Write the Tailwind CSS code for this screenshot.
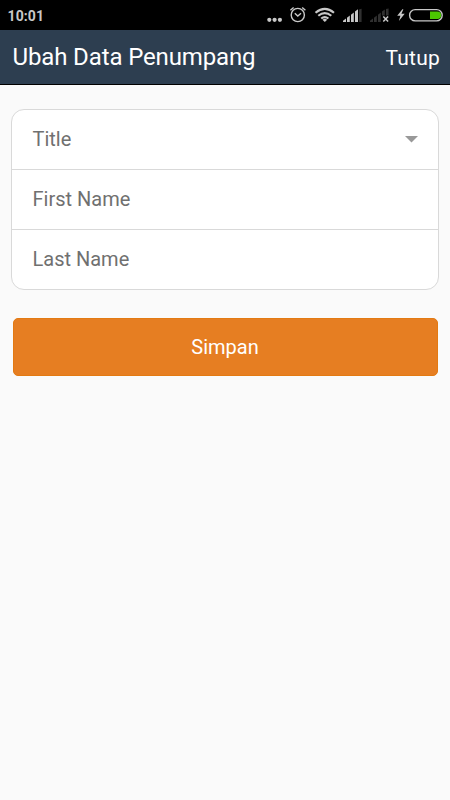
<!DOCTYPE html>
<html lang="id">
<head>
<meta charset="utf-8">
<title>Ubah Data Penumpang</title>
<script src="https://cdn.jsdelivr.net/npm/@tailwindcss/browser@4"></script>
</head>
<body class="flex h-[800px] w-[450px] flex-col overflow-hidden bg-[#fafafa] font-['Roboto',sans-serif]">
  <div class="flex h-[30px] items-center justify-between bg-black pl-[7.5px] text-[#c8c8c8]">
    <span class="pt-px text-[14px] font-bold leading-none tracking-[0.1px]">10:01</span>
    <svg class="h-[30px] w-[190px]" viewBox="260 0 190 30" fill="none" stroke="#c8c8c8">
      <g fill="#c8c8c8" stroke="none"><circle cx="269.3" cy="19.8" r="2.1"/><circle cx="274.6" cy="19.8" r="2.1"/><circle cx="279.9" cy="19.8" r="2.1"/></g>
      <g stroke-width="1.4"><circle cx="297.8" cy="15" r="6.6"/><path d="M294.8 13.3l3 2.8 3.2-2.8M290.4 10.3l3.2-2.8M305.4 10.3l-3.2-2.8"/></g>
      <g stroke-width="2.1"><path d="M315.5 12.8Q324.8 5 334 12.8M318.3 15.8Q324.8 10.4 331.3 15.8M321.2 18.5Q324.8 15.6 328.4 18.5"/></g>
      <path d="M322.4 19.7Q324.8 18 327.2 19.7L324.8 22Z" fill="#c8c8c8" stroke="none"/>
      <path fill="#c8c8c8" stroke="none" d="M343 22v-1.2l3-2.3v3.5zM347 22v-4.3l2.8-2.1v6.4zM351 22v-7.3l2.8-2.2v9.5zM355 22v-10.4l3-2.3v12.7z"/>
      <path fill="#303030" stroke="none" d="M359 22v-12.5l2.6-.8v13.3zM370 22v-1.2l3-2.3v3.5zM374 22v-4.3l2.8-2.1v6.4zM378 22v-7.3l2.8-2.2v9.5zM382 15.5v-4l2.8-2.1v6.1zM386 15.5v-6.4l2.6-.5v6.9z"/>
      <path stroke-width="1.5" d="M383.3 16.5l4.8 5M388.1 16.5l-4.8 5"/>
      <path fill="#c8c8c8" stroke="none" d="M402.4 9.3l-5.2 6.4h3.2l-1.5 5.3 5.8-7.2h-3.3l2-4.5z"/>
      <rect x="409.6" y="9.6" width="32.6" height="11.3" rx="5.6" stroke-width="1.4"/>
      <path fill="#4cc800" stroke="none" d="M430 11.5h7.4a3.7 3.7 0 0 1 0 7.5h-7.4z"/>
    </svg>
  </div>
  <header class="flex h-[55px] items-center justify-between border-b border-black bg-[#2d3e50] pl-[12.5px] pr-[10px] text-white">
    <h1 class="text-[24px] leading-[54px] tracking-[-0.13px]">Ubah Data Penumpang</h1>
    <button class="pt-[3px] text-[21px] leading-none tracking-[0.25px]">Tutup</button>
  </header>
  <main class="px-[11px] pt-6">
    <div class="h-[181px] w-[428px] divide-y divide-[#d9d9d9] rounded-[13px] border border-[#d9d9d9] bg-white text-[20px] text-[#707070]">
      <div class="flex h-[60px] items-center justify-between pl-[20.5px] pr-5 leading-none">
        <span class="pb-px">Title</span>
        <svg class="h-[7px] w-[13px]" viewBox="0 0 13 7"><path d="M0 0h13L6.5 6.5z" fill="#999"/></svg>
      </div>
      <div class="flex h-[60px] items-center pb-0.5 pl-[20.5px] leading-none">First Name</div>
      <div class="flex h-[60px] items-center pb-0.5 pl-[20.5px] leading-none">Last Name</div>
    </div>
    <button class="ml-[1.5px] mt-[27.5px] flex h-[58.5px] w-[425px] items-center justify-center rounded-[5px] border border-[#e37a12] bg-[#e67e22] text-[20px] leading-none text-white">Simpan</button>
  </main>
</body>
</html>
